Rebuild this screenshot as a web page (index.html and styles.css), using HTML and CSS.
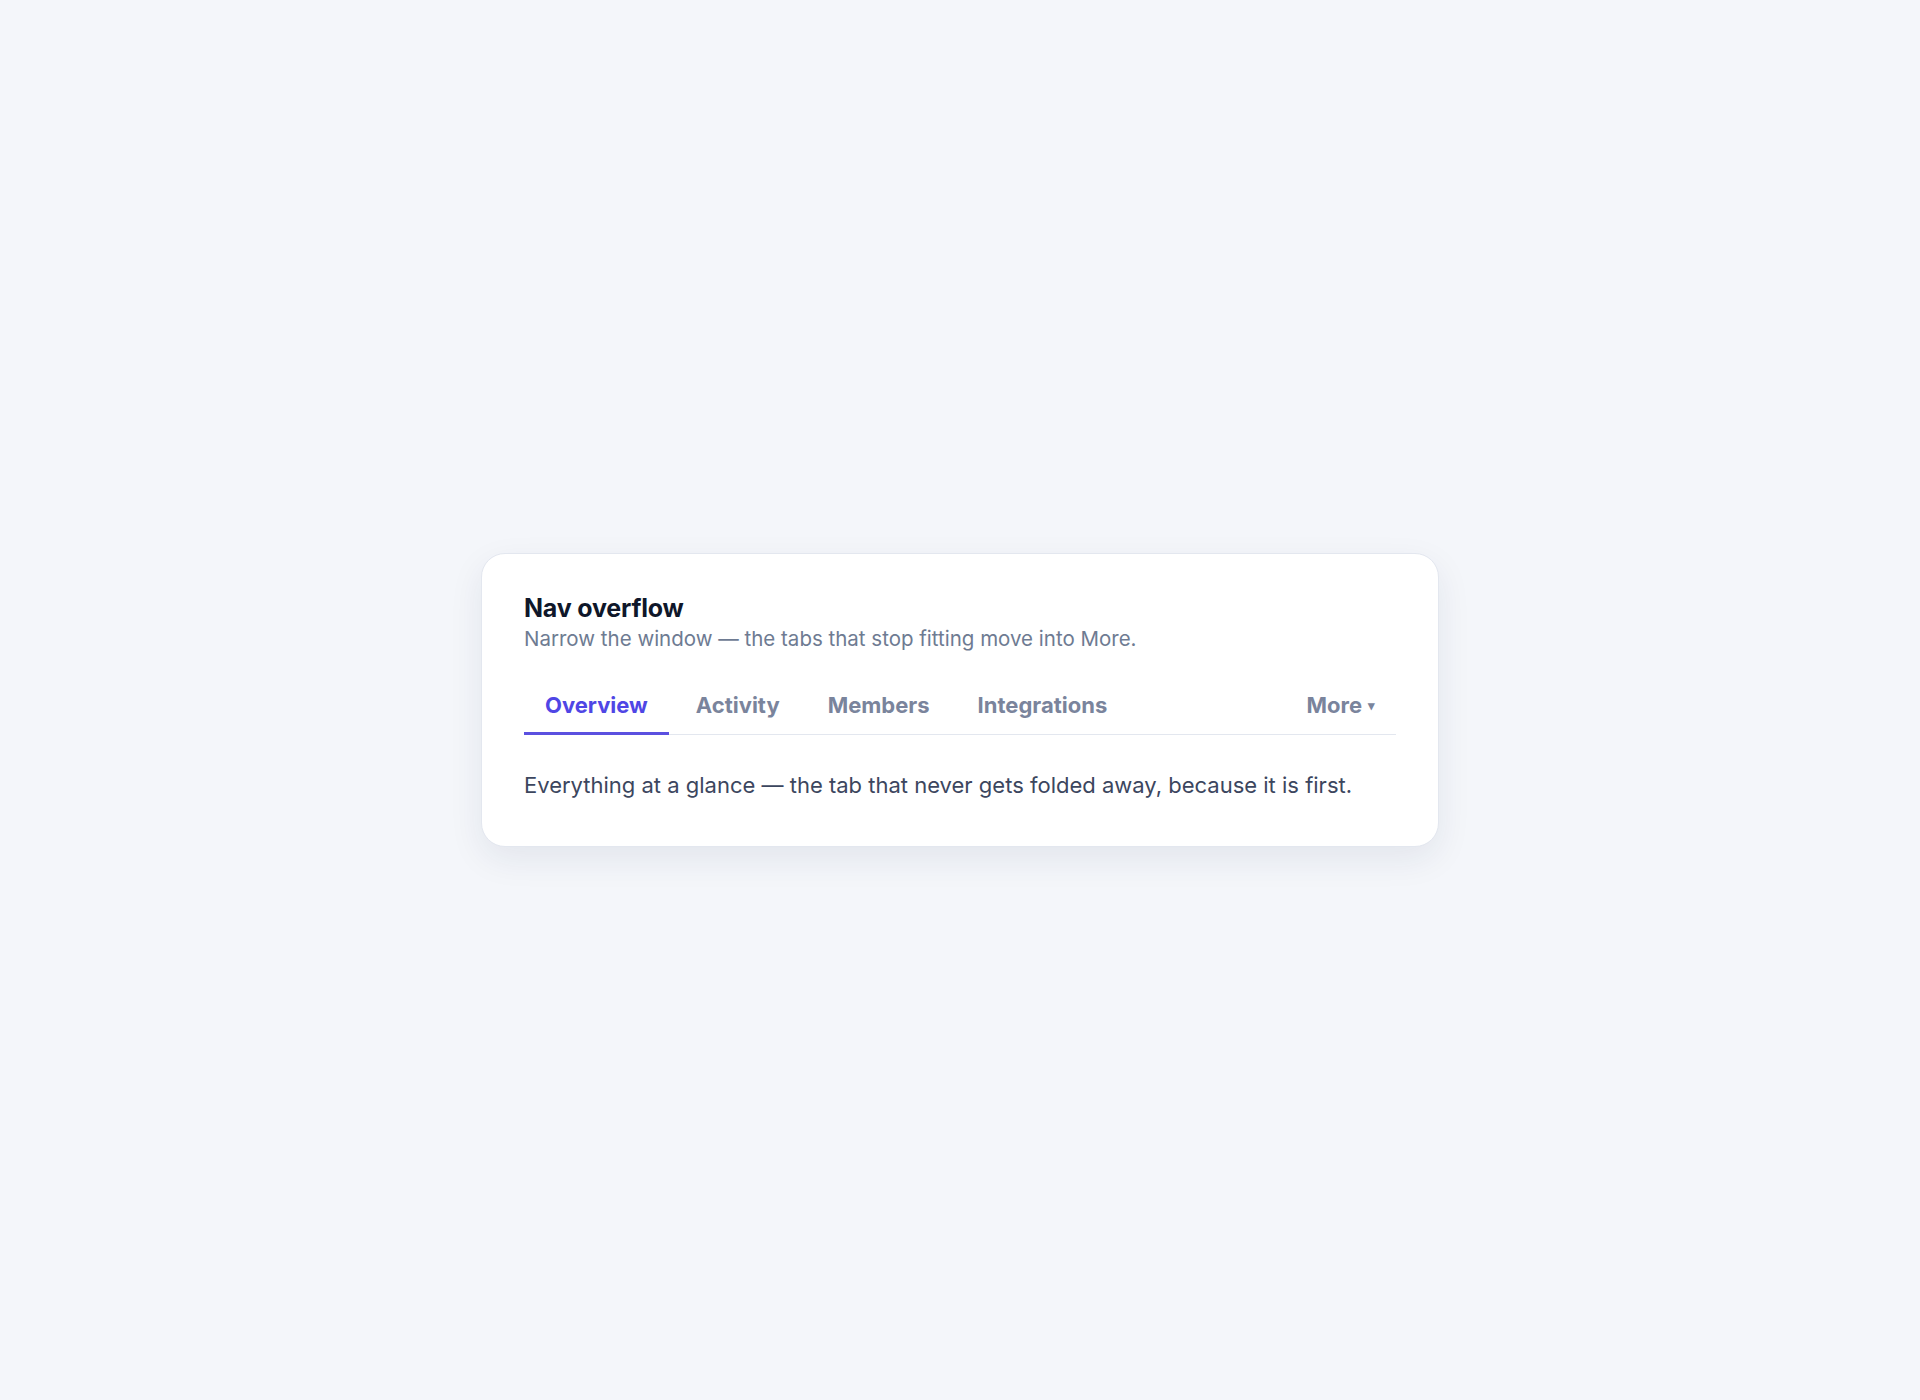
FILE: index.html
```html
<!DOCTYPE html>
<html lang="en">
<head>
    <meta charset="UTF-8">
    <title>Nav overflow</title>
    <link rel="stylesheet" href="styles.css">
</head>
<body>
    <div class="card">
        <h1 class="card-title">Nav overflow</h1>
        <p class="card-sub">Narrow the window — the tabs that stop fitting move into More.</p>

        <!-- Tabs -->
        <nav class="tabs">
            <a class="tab active" href="#">Overview</a>
            <a class="tab" href="#">Activity</a>
            <a class="tab" href="#">Members</a>
            <a class="tab" href="#">Integrations</a>
            <button class="tab more">More <span class="caret">▾</span></button>
        </nav>

        <p class="panel">Everything at a glance — the tab that never gets folded away, because it is first.</p>
    </div>
</body>
</html>
```

FILE: styles.css
```css
/* === Base === */
body {
    margin: 0;
    background: #f4f6fa;
    font-family: Inter, "Noto Sans", sans-serif;
    display: flex;
    justify-content: center;
    align-items: center;
    height: 100vh;
}

/* === Card === */
.card {
    width: 958px;
    box-sizing: border-box;
    background: #fff;
    border: 1px solid #e3e7ef;
    border-radius: 24px;
    padding: 38px 42px 45px 42px;
    box-shadow: 0 12px 34px rgba(30, 41, 80, 0.08);
}

.card-title {
    margin: 0;
    font-size: 25px;
    line-height: 32px;
    font-weight: 700;
    color: #0f172a;
    letter-spacing: -0.2px;
}

.card-sub {
    margin: 0;
    font-size: 20.5px;
    line-height: 30px;
    color: #6e7b92;
}

/* === Tabs === */
.tabs {
    display: flex;
    gap: 6px;
    margin-top: 28px;
    border-bottom: 1px solid #e3e7ef;
}

.tab {
    display: flex;
    align-items: center;
    padding: 10px 21px 14px;
    font: inherit;
    font-size: 22px;
    font-weight: 700;
    color: #7a849c;
    text-decoration: none;
    border: 0;
    background: none;
    border-bottom: 3px solid transparent;
    margin-bottom: -1px;
}

.tab.active {
    color: #4f46e5;
    border-bottom-color: #5b50e0;
}

.tab.more {
    margin-left: auto;
    cursor: pointer;
}

.caret {
    font-size: 13px;
    margin-left: 6px;
}

.panel {
    margin: 34px 0 0;
    font-size: 22px;
    line-height: 32px;
    color: #3c465e;
}
```
